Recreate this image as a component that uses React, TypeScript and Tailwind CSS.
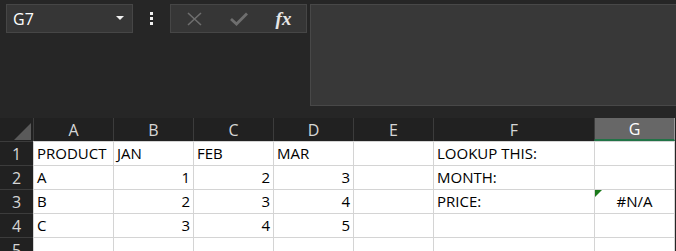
import React from "react";

const cols = ["A", "B", "C", "D", "E", "F", "G"];
const widths = ["w-[80px]", "w-[80px]", "w-[80px]", "w-[80px]", "w-[80px]", "w-[161px]", "w-[81px]"];

type Cell = { t?: string; r?: boolean; c?: boolean; tri?: boolean };
const rows: Cell[][] = [
  [{ t: "PRODUCT" }, { t: "JAN" }, { t: "FEB" }, { t: "MAR" }, {}, { t: "LOOKUP THIS:" }, {}],
  [{ t: "A" }, { t: "1", r: true }, { t: "2", r: true }, { t: "3", r: true }, {}, { t: "MONTH:" }, {}],
  [{ t: "B" }, { t: "2", r: true }, { t: "3", r: true }, { t: "4", r: true }, {}, { t: "PRICE:" }, { t: "#N/A", c: true, tri: true }],
  [{ t: "C" }, { t: "3", r: true }, { t: "4", r: true }, { t: "5", r: true }, {}, {}, {}],
  [{}, {}, {}, {}, {}, {}, {}],
];

export default function App() {
  return (
    <div className="w-[676px] h-[251px] bg-[#262626] overflow-hidden" style={{ fontFamily: '"Open Sans", "Noto Sans", sans-serif' }}>
      <div className="flex items-start h-[118px] pt-[4px] pl-[6px]">
        <div className="w-[127px] h-[29px] bg-[#363636] border border-[#464646] flex items-center justify-between pl-[6px] pr-[8px]">
          <span className="text-[16px] text-white leading-none">G7</span>
          <svg width="8" height="5" viewBox="0 0 8 5"><path d="M0 0H8L4 4Z" fill="#f0f0f0" /></svg>
        </div>
        <div className="w-[37px] h-[29px] flex items-center justify-center">
          <div className="flex flex-col gap-[2px]">
            <div className="w-[3px] h-[3px] bg-[#f0f0f0]" />
            <div className="w-[3px] h-[3px] bg-[#f0f0f0]" />
            <div className="w-[3px] h-[3px] bg-[#f0f0f0]" />
          </div>
        </div>
        <div className="w-[137px] h-[29px] bg-[#363636] border border-[#464646] flex items-center">
          <div className="w-[45px] flex justify-center pl-[2px]">
            <svg width="15" height="14" viewBox="0 0 15 14"><path d="M1 1L14 13M14 1L1 13" stroke="#6e6e6e" strokeWidth="1.6" /></svg>
          </div>
          <div className="w-[45px] flex justify-center">
            <svg width="18" height="14" viewBox="0 0 18 14"><path d="M1 7L6.5 12L17 1.5" stroke="#6e6e6e" strokeWidth="2.8" fill="none" /></svg>
          </div>
          <div className="w-[45px] flex justify-center">
            <span className="italic font-bold text-[#e6e6e6] text-[19px] leading-none" style={{ fontFamily: '"Liberation Serif", serif' }}>fx</span>
          </div>
        </div>
        <div className="ml-[3px] flex-1 h-[102px] bg-[#383838] border border-[#484848] border-r-0" />
      </div>
      <div className="flex flex-col">
        <div className="flex h-[23px] bg-[#212121]">
          <div className="w-[33px] h-full relative">
            <svg className="absolute left-[14px] top-[5px]" width="17" height="17" viewBox="0 0 17 17"><path d="M17 0V17H0Z" fill="#5a5a5a" /></svg>
          </div>
          {cols.map((c, i) => (
            <div
              key={c}
              className={`${widths[i]} h-full border-l border-[#3c3c3c] flex items-center justify-center text-[16px] ${c === "G" ? "bg-[#676767] border-b-2 border-b-[#217346] text-white border-r border-r-[#9a9a9a]" : "text-[#d6d6d6]"}`}
            >
              {c}
            </div>
          ))}
        </div>
        {rows.map((row, ri) => (
          <div key={ri} className="flex h-[24px]">
            <div className="w-[33px] h-full bg-[#212121] border-t border-[#3c3c3c] flex items-center justify-center text-[16px] text-[#d6d6d6]">
              {ri + 1}
            </div>
            {row.map((cell, ci) => (
              <div
                key={ci}
                className={`${widths[ci]} h-full bg-white border-t border-l border-[#d4d4d4] ${ci === 6 ? "border-r" : ""} relative flex items-end pb-[2px] px-[3px] text-[15px] leading-[20px] text-black ${cell.r ? "justify-end" : cell.c ? "justify-center" : "justify-start"}`}
              >
                {cell.tri && (
                  <svg className="absolute left-0 top-0" width="7" height="7" viewBox="0 0 7 7"><path d="M0 0H7L0 7Z" fill="#1b7a1b" /></svg>
                )}
                {cell.t}
              </div>
            ))}
          </div>
        ))}
      </div>
    </div>
  );
}
